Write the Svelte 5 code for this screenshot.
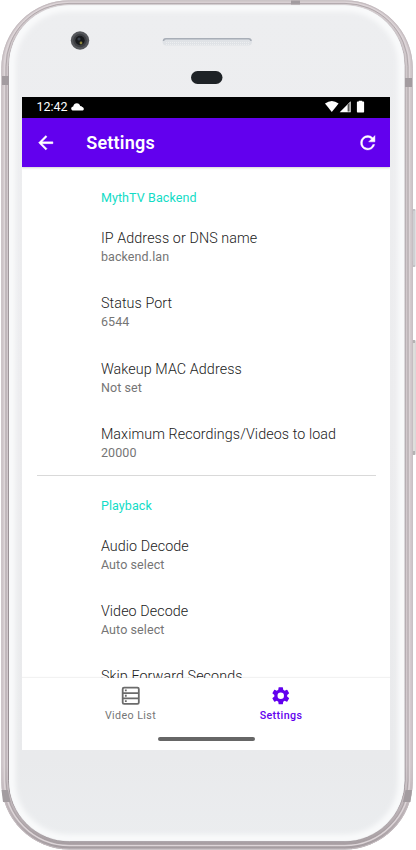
<script>
  const groups = [
    {
      title: 'MythTV Backend',
      items: [
        ['IP Address or DNS name', 'backend.lan'],
        ['Status Port', '6544'],
        ['Wakeup MAC Address', 'Not set'],
        ['Maximum Recordings/Videos to load', '20000']
      ]
    },
    {
      title: 'Playback',
      items: [
        ['Audio Decode', 'Auto select'],
        ['Video Decode', 'Auto select'],
        ['Skip Forward Seconds', '']
      ]
    }
  ];
</script>

<div class="phone">
  <svg class="shell" width="416" height="850" viewBox="0 0 416 850" aria-hidden="true">
    <defs>
      <linearGradient id="face" x1="0" y1="0" x2="0" y2="1">
        <stop offset="0" stop-color="#edeef0" />
        <stop offset="0.5" stop-color="#ececee" />
        <stop offset="0.9" stop-color="#e9eaec" />
        <stop offset="1" stop-color="#ebedef" />
      </linearGradient>
      <linearGradient id="metal" x1="0" y1="0" x2="0" y2="1">
        <stop offset="0" stop-color="#d0c8cb" />
        <stop offset="0.9" stop-color="#d2c9cd" />
        <stop offset="0.96" stop-color="#b9b0b4" />
        <stop offset="1" stop-color="#a49ca0" />
      </linearGradient>
      <linearGradient id="edge" x1="0" y1="0" x2="0" y2="1">
        <stop offset="0" stop-color="#d3ced1" />
        <stop offset="0.05" stop-color="#b5adb1" />
        <stop offset="0.12" stop-color="#a29a9e" />
        <stop offset="1" stop-color="#958c91" />
      </linearGradient>
      <filter id="soft"><feGaussianBlur stdDeviation="2.5" /></filter>
      <clipPath id="faceClip"><rect x="9" y="5.2" width="395.5" height="836" rx="60" /></clipPath>
    </defs>
    <rect x="411.5" y="209" width="4" height="58" rx="1" fill="#c2c2c5" />
    <path d="M414 211v54" stroke="#dcdfe1" />
    <rect x="411.5" y="340" width="4" height="115" rx="1" fill="#b5b3b3" />
    <path d="M414 343v108" stroke="#eeeeea" stroke-width="1.5" />
    <path d="M412.5 210v4M412.5 261v4M412.5 340v3M412.5 451v3" stroke="#88868a" />
    <rect x="1.3" y="0.3" width="411.5" height="849.2" rx="68" fill="url(#metal)" />
    <rect x="1.8" y="0.8" width="410.5" height="848.2" rx="67.5" fill="none" stroke="#c5bcc0" />
    <rect x="4.5" y="2.5" width="405" height="843" rx="65" fill="none" stroke="#ddd5d8" stroke-width="1.4" />
    <rect x="6" y="3.4" width="402" height="840.5" rx="63" fill="none" stroke="#a79ea2" stroke-width="0.8" />
    <rect x="8.5" y="4.7" width="396.5" height="836.7" rx="61" fill="url(#face)" stroke="url(#edge)" stroke-width="1" />
    <g clip-path="url(#faceClip)">
      <rect x="11" y="7" width="391.5" height="832" rx="58" fill="none" stroke="#f9fafb" stroke-width="9" filter="url(#soft)" />
    </g>
    <g fill="#a39ca0">
      <rect x="2" y="76" width="7" height="9" />
      <rect x="405" y="78" width="7" height="9" />
      <rect x="291" y="0.5" width="9" height="4" />
      <path d="M1.5 790h6.5l2.5 12H3z" />
      <path d="M405.5 790h6.500l-1.500 12H403z" />
    </g>
    <circle cx="80" cy="40.5" r="9.2" fill="#55575b" />
    <circle cx="80" cy="40.5" r="6.8" fill="#3d3f43" />
    <circle cx="80" cy="40.5" r="4.7" fill="#17191c" />
    <circle cx="79" cy="39" r="1.6" fill="#39404a" />
    <circle cx="81" cy="43" r="1.4" fill="#8c853c" />
    <rect x="162.5" y="38" width="89.5" height="7.5" rx="3.7" fill="#dfe2e6" />
    <path d="M163.5 41q0-2.3 2.5-2.3h82.5q2.5 0 2.5 2.3" fill="none" stroke="#a8aeb7" stroke-width="1.5" />
    <path d="M166 42.5h83M166 44.5h83" stroke="#eceef0" stroke-width="1" stroke-dasharray="1 1" />
    <rect x="191" y="71" width="31.5" height="13" rx="6.5" fill="#1e2226" />
  </svg>

  <main class="screen">
    <div class="status">
      <span class="time">12:42</span>
      <svg class="cloud" width="13" height="8" viewBox="0 0 13 8"><path fill="#fff" d="M2.500 7.600C1 7.600.2 6.700.2 5.500.2 4.300 1 3.500 2.200 3.400 2.700 1.400 4 .3 5.800.3c1.900 0 3 1.100 3.500 3 .3-.2.6-.2.9-.2.2.5.5.8 1.100 1 .9.300 1.500.8 1.500 1.800 0 1-.8 1.700-1.900 1.700z" /></svg>
      <svg class="signals" width="41" height="13" viewBox="0 0 41 13" fill="#fff">
        <path d="M0 3.600Q6.800-1.700 13.600 3.600L6.800 12z" />
        <path d="M14.700 12.200L25.700 1.200v11z" />
        <path d="M22.600 4.800l2-2v8.700h-2z" fill="#555" />
        <path d="M31.900 2.200q0-.7.700-.7h1.200V.7h3.400v.8h1.200q.7 0 .7.700v9.500q0 .7-.7.700h-5.800q-.7 0-.7-.7z" />
      </svg>
    </div>
    <header>
      <svg width="21.500" height="21.500" viewBox="0 0 24 24" fill="#fff" stroke="#fff" stroke-width="0.500"><path d="M20 11H7.830l5.590-5.590L12 4l-8 8 8 8 1.410-1.410L7.830 13H20v-2z" /></svg>
      <h1>Settings</h1>
      <svg class="refresh" width="21.500" height="21.500" viewBox="0 0 24 24" fill="#fff" stroke="#fff" stroke-width="0.500"><path d="M17.650 6.350A7.960 7.960 0 0 0 12 4a8 8 0 1 0 7.730 10h-2.080A6 6 0 1 1 12 6c1.660 0 3.140.69 4.220 1.780L13 11h7V4z" /></svg>
    </header>
    <div class="list">
      {#each groups as group}
        <section>
          <h2>{group.title}</h2>
          {#each group.items as [name, value]}
            <div class="item">
              <div class="name">{name}</div>
              <div class="value">{value}</div>
            </div>
          {/each}
        </section>
      {/each}
    </div>
    <nav>
      <div class="tabs">
        <div class="tab">
          <svg width="21.500" height="21.500" viewBox="0 0 24 24" fill="none" stroke="#6b6b6b" stroke-width="2"><rect x="3" y="3" width="18" height="18" rx="1.500" /><path d="M3 9h18M3 15h18" /><path d="M5.500 6h2M5.500 12h2M5.500 18h2" /></svg>
          <span>Video List</span>
        </div>
        <div class="tab active">
          <svg width="21.500" height="21.500" viewBox="0 0 24 24" fill="#6200ee"><path d="M19.140 12.940c.04-.3.060-.61.060-.94 0-.32-.02-.64-.07-.94l2.030-1.580a.49.49 0 0 0 .12-.61l-1.920-3.320a.488.488 0 0 0-.59-.22l-2.390.96c-.5-.38-1.030-.7-1.620-.94l-.36-2.540a.484.484 0 0 0-.48-.41h-3.840c-.24 0-.43.17-.47.41l-.36 2.540c-.59.24-1.130.57-1.620.94l-2.390-.96c-.22-.08-.47 0-.59.22L2.740 8.870c-.12.21-.08.47.12.61l2.030 1.580c-.05.3-.09.630-.09.940s.02.640.07.940l-2.030 1.580a.49.49 0 0 0-.12.610l1.920 3.320c.12.220.37.290.59.220l2.390-.96c.5.380 1.030.7 1.620.940l.36 2.540c.05.240.24.410.48.410h3.840c.24 0 .44-.17.470-.41l.36-2.540c.59-.24 1.130-.56 1.620-.94l2.390.96c.22.080.47 0 .59-.22l1.920-3.320c.12-.22.070-.47-.12-.61zM12 15.600A3.600 3.600 0 1 1 12 8.400a3.600 3.600 0 0 1 0 7.200z" /></svg>
          <span>Settings</span>
        </div>
      </div>
      <div class="handle"></div>
    </nav>
  </main>
</div>

<style>
  :global(body) { margin: 0; background: #fff; overflow: hidden; }
  .phone {
    position: relative;
    width: 416px;
    height: 850px;
    box-sizing: border-box;
    padding: 96.5px 26px 100px 22px;
    font-family: Roboto, "Liberation Sans", sans-serif;
  }
  .shell { position: absolute; inset: 0; }
  .screen {
    position: relative;
    display: flex;
    flex-direction: column;
    width: 368px;
    height: 653px;
    background: #fff;
    overflow: hidden;
  }
  .status {
    flex: none;
    display: flex;
    align-items: center;
    height: 21px;
    padding: 0 25px 0 14.5px;
    box-sizing: border-box;
    background: #000;
    color: #fff;
  }
  .time { font-size: 12.5px; font-weight: 450; margin-top: -1px; }
  .cloud { margin-left: 3.5px; margin-top: -1px; }
  .signals { margin-left: auto; margin-right: -1px; margin-top: -1px; }
  header {
    flex: none;
    display: flex;
    align-items: center;
    height: 49.7px;
    padding: 0 12px 0 13.3px;
    box-sizing: border-box;
    background: #6200ee;
    box-shadow: 0 1px 2px rgba(0, 0, 0, 0.18);
    z-index: 1;
  }
  h1 { margin: 2px 0 0 29.5px; color: #fff; font-size: 18px; font-weight: 600; line-height: 24px; letter-spacing: 0.2px; }
  .refresh { margin-left: auto; }
  .list { flex: 1; min-height: 0; overflow: hidden; }
  section { margin: 0 14.5px; padding: 10.3px 0 0 64.4px; }
  section + section { border-top: 1px solid #d9d9d9; padding-top: 9px; }
  h2 {
    margin: 0;
    height: 36px;
    padding-top: 12px;
    box-sizing: border-box;
    color: #12dcc6;
    font-size: 12.5px;
    line-height: 18px;
    font-weight: 450;
    letter-spacing: 0.1px;
  }
  .item { height: 65.4px; padding-top: 14.5px; box-sizing: border-box; white-space: nowrap; }
  .name { color: #212121; font-size: 14.3px; font-weight: 360; line-height: 20px; letter-spacing: 0.09px; }
  .value { color: #757575; font-size: 12.5px; font-weight: 380; line-height: 17px; letter-spacing: 0.1px; }
  nav {
    flex: none;
    height: 72px;
    background: #fff;
    box-shadow: 0 -1px 1px rgba(0, 0, 0, 0.05);
  }
  .tabs { display: flex; justify-content: center; height: 59.8px; }
  .tab {
    width: 150.5px;
    display: flex;
    flex-direction: column;
    align-items: center;
    padding-top: 7.3px;
    box-sizing: border-box;
    color: #757575;
    font-size: 10.7px;
    line-height: 13px;
    letter-spacing: 0.4px;
  }
  .active { color: #6200ee; font-weight: 500; }
  .tab svg { margin-left: -1px; }
  .tab span { margin: 2.5px 0 0 -0.5px; }
  .handle { width: 97px; height: 3.4px; border-radius: 2px; margin: 0 auto; background: #666; }
</style>
